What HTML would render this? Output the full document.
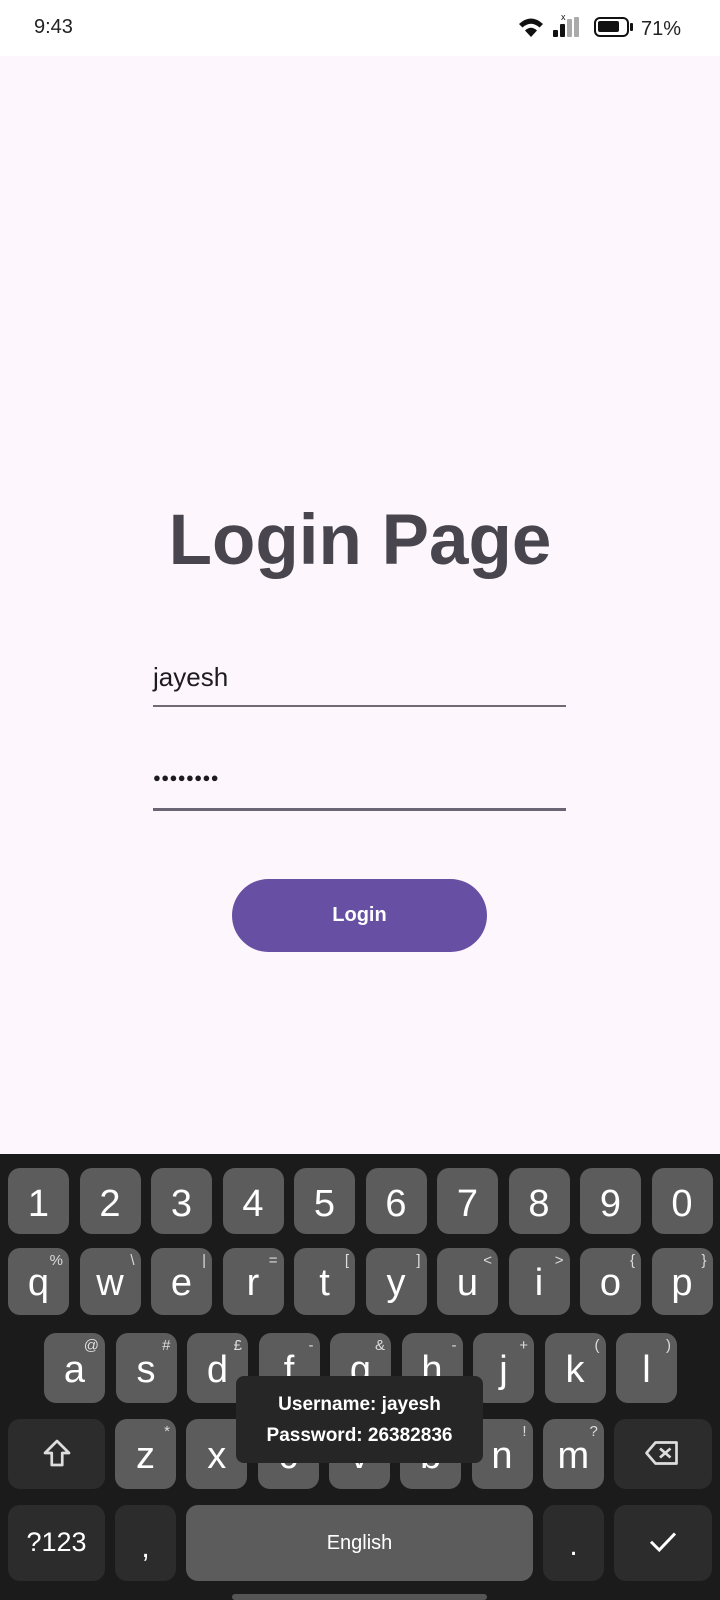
<!DOCTYPE html>
<html><head><meta charset="utf-8"><style>
*{margin:0;padding:0;box-sizing:border-box}
body{width:720px;height:1600px;background:#fdf7fd;font-family:"Liberation Sans",sans-serif;position:relative;overflow:hidden}
.abs{position:absolute}
.sb{left:0;top:0;width:720px;height:56px;background:#fff}
.kb{left:0;top:1154px;width:720px;height:446px;background:#1b1b1b}
.k{position:absolute;background:#5c5c5c;border-radius:12px;color:#fff;font-size:34px;text-align:center}
.k.d{background:#2c2c2c}
.k span{position:absolute;left:0;right:0}
.k sup{position:absolute;right:6px;top:4px;font-size:15px;color:#ddd}
</style></head><body>
<div class="abs sb">
<div class="abs" style="left:34px;top:16px;font-size:20px;color:#222">9:43</div>
<svg class="abs" style="left:518px;top:16px" width="30" height="24" viewBox="0 0 30 24"><path d="M1 8 Q13 -3 25 8 L21.5 11.5 Q13 4 4.5 11.5Z M7 14.5 Q13 9 19 14.5 L13 21Z" fill="#111"/></svg>
<div class="abs" style="left:553px;top:30px;width:5px;height:7px;background:#111;border-radius:1px"></div>
<div class="abs" style="left:560px;top:24px;width:5px;height:13px;background:#111;border-radius:1px"></div>
<div class="abs" style="left:567px;top:19px;width:5px;height:18px;background:#aaa;border-radius:1px"></div>
<div class="abs" style="left:574px;top:17px;width:5px;height:20px;background:#aaa;border-radius:1px"></div>
<div class="abs" style="left:561px;top:12px;font-size:9px;color:#111">x</div>
<div class="abs" style="left:594px;top:17px;width:35px;height:20px;border:2.5px solid #111;border-radius:6px"><div style="margin:2px;width:21px;height:11px;background:#111;border-radius:2px"></div></div>
<div class="abs" style="left:630px;top:23px;width:3px;height:8px;background:#111;border-radius:1px"></div>
<div class="abs" style="left:641px;top:18px;font-size:20px;color:#222">71%</div>
</div>

<div class="abs" style="left:0;width:720px;top:496px;text-align:center;font-size:71px;font-weight:bold;color:#48454e;line-height:90px">Login Page</div>
<div class="abs" style="left:153px;top:662px;font-size:26px;color:#1d1b20">jayesh</div>
<div class="abs" style="left:153px;top:705px;width:413px;height:2px;background:#6f6a75"></div>
<div class="abs" style="left:153px;top:770px;font-size:13px;color:#1d1b20;letter-spacing:0.4px">●●●●●●●●</div>
<div class="abs" style="left:153px;top:808px;width:413px;height:3px;background:#6a6474"></div>
<div class="abs" style="left:232px;top:879px;width:255px;height:73px;border-radius:37px;background:#6750a4;color:#fff;font-weight:bold;font-size:20px;text-align:center;line-height:73px">Login</div>

<div class="abs kb"></div>
<div id="keys"></div>
<script>
var h='';
function key(x,y,w,hh,t,sup,dark,fs,ty){h+='<div class="k'+(dark?' d':'')+'" style="left:'+x+'px;top:'+y+'px;width:'+w+'px;height:'+hh+'px"><span style="top:'+(ty||12)+'px;font-size:'+(fs||34)+'px">'+t+'</span>'+(sup?'<sup>'+sup+'</sup>':'')+'</div>';}
var n='1234567890';for(var i=0;i<10;i++)key(8+i*71.5,1168,61,66,n[i],'',0,38,15);
var q='qwertyuiop',qs=['%','\\','|','=','[',']','&lt;','&gt;','{','}'];for(i=0;i<10;i++)key(8+i*71.5,1248,61,67,q[i],qs[i],0,38,14);
var a='asdfghjkl',as=['@','#','£','-','&amp;','-','+','(',')'];for(i=0;i<9;i++)key(44+i*71.5,1333,61,70,a[i],as[i],0,38,16);
key(8,1419,97,70,'<svg width="36" height="36" viewBox="0 0 24 24"><path d="M12 4 L4 12 H8.5 V20 H15.5 V12 H20Z" fill="none" stroke="#ddd" stroke-width="1.8" stroke-linejoin="round"/></svg>','',1,34,16);
var z='zxcvbnm',zs=['*','"',"'",':',';','!','?'];for(i=0;i<7;i++)key(115+i*71.3,1419,61,70,z[i],zs[i],0,38,16);
key(614,1419,98,70,'<svg width="40" height="36" viewBox="0 0 26 24"><path d="M8 5 H22 V19 H8 L2 12Z" fill="none" stroke="#ddd" stroke-width="1.8" stroke-linejoin="round"/><path d="M11 9 L18 15 M18 9 L11 15" stroke="#ddd" stroke-width="1.8"/></svg>','',1,34,16);
key(8,1505,97,76,'?123','',1,27,22);
key(115,1505,61,76,',','',1,30,26);
key(186,1505,347,76,'English','',0,20,27);
key(543,1505,61,76,'.','',1,30,24);
key(614,1505,98,76,'<svg width="36" height="36" viewBox="0 0 24 24"><path d="M4 12.5 L9.5 18 L20 7" fill="none" stroke="#fff" stroke-width="2"/></svg>','',1,34,18);
h+='<div class="abs" style="left:236px;top:1376px;width:247px;height:87px;background:#262626;border-radius:8px;color:#fff;font-size:19px;font-weight:bold;text-align:center;line-height:31px;padding-top:13px">Username: jayesh<br>Password: 26382836</div>';
h+='<div class="abs" style="left:232px;top:1594px;width:255px;height:6px;background:#555;border-radius:3px"></div>';
document.getElementById('keys').innerHTML=h;
</script>
</body></html>
